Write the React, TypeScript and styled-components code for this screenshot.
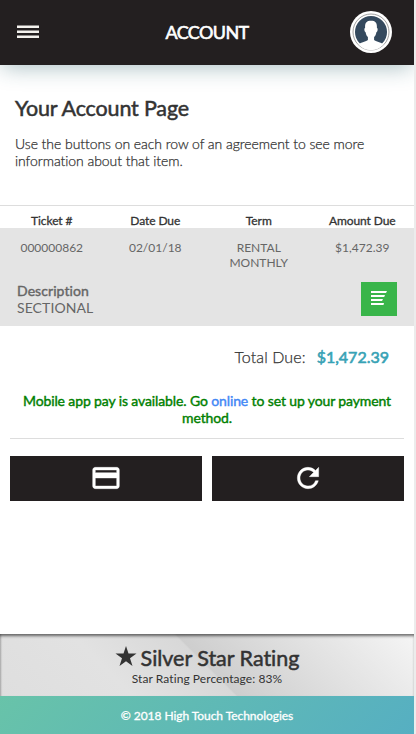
import React from 'react';
import styled, { createGlobalStyle } from 'styled-components';

const Global = createGlobalStyle`
  * { box-sizing: border-box; }
  body { margin: 0; background: #fff; font-family: Lato, sans-serif; color: #333; font-variant-ligatures: none; }
  h1, h2, p { margin: 0; font-weight: 400; }
`;

const Screen = styled.div`
  width: 416px;
  height: 734px;
  display: flex;
  flex-direction: column;
  overflow: hidden;
  border-right: 2px solid #ececec;
`;

const Header = styled.header`
  flex: none;
  height: 65px;
  display: grid;
  grid-template-columns: 64px 1fr 64px;
  align-items: center;
  background: #231f20;
  box-shadow: 0 4px 22px -2px rgba(35, 90, 100, 0.4);
  color: #fff;
`;

const MenuIcon = styled.svg`
  width: 22px;
  height: 14px;
  margin: -2px 0 0 17px;
  fill: #f4f2ee;
`;

const Title = styled.h1`
  font-size: 18px;
  line-height: 22px;
  margin-top: -2px;
  letter-spacing: -0.6px;
  text-align: center;
  -webkit-text-stroke: 0.6px currentColor;
`;

const Avatar = styled.svg`
  width: 42px;
  height: 42px;
  margin-top: -2px;
`;

const Intro = styled.section`
  flex: none;
  height: 140px;
  padding: 29px 15px 0;
`;

const Heading = styled.h2`
  font-size: 21.5px;
  line-height: 28px;
  letter-spacing: -0.16px;
  -webkit-text-stroke: 0.5px currentColor;
`;

const Lead = styled.p`
  margin-top: 13px;
  font-size: 14px;
  line-height: 17px;
  font-weight: 300;
  letter-spacing: -0.06px;
  -webkit-text-stroke: 0.25px currentColor;
`;

const Columns = styled.div<{ $head?: boolean }>`
  display: grid;
  grid-template-columns: repeat(4, 1fr);
  text-align: center;
  font-size: 12px;
  line-height: 15px;
  color: ${(p) => (p.$head ? '#333' : '#666')};
  ${(p) =>
    p.$head
      ? 'flex: none; height: 23px; padding-top: 7px; border-top: 1px solid #ddd; letter-spacing: -0.08px; -webkit-text-stroke: 0.3px currentColor;'
      : 'height: 54px; padding-top: 12px;'}
`;

const Agreement = styled.section`
  flex: none;
  height: 98px;
  background: #e4e4e4;
  color: #666;
`;

const Details = styled.div`
  display: flex;
  justify-content: space-between;
  padding: 0 17px;
  font-size: 14px;
  line-height: 17px;
  letter-spacing: 0.08px;
`;

const Label = styled.div`
  -webkit-text-stroke: 0.4px currentColor;
`;

const DetailsButton = styled.button`
  width: 36px;
  height: 34px;
  padding: 0 0 2px;
  border: 0;
  background: #39b54a;
  display: grid;
  place-items: center;
`;

const Total = styled.div`
  flex: none;
  display: flex;
  justify-content: flex-end;
  gap: 11px;
  height: 66px;
  padding: 21px 25px 0 0;
  font-size: 16px;
  line-height: 20px;
`;

const TotalLabel = styled.span`
  font-weight: 300;
  letter-spacing: 0.1px;
  -webkit-text-stroke: 0.25px currentColor;
`;

const Amount = styled.span`
  color: #37a2b5;
  -webkit-text-stroke: 0.6px currentColor;
`;

const Notice = styled.p`
  flex: none;
  height: 47px;
  margin: 0 10px;
  border-bottom: 1px solid #ddd;
  text-align: center;
  font-size: 14px;
  line-height: 17px;
  letter-spacing: -0.12px;
  color: #008000;
  -webkit-text-stroke: 0.4px currentColor;
`;

const Link = styled.a`
  color: #4287f5;
`;

const Actions = styled.div`
  flex: none;
  display: grid;
  grid-template-columns: 1fr 1fr;
  gap: 10px;
  padding: 17px 10px 0;
`;

const Action = styled.button`
  height: 45px;
  padding: 0 0 2px;
  border: 0;
  background: #231f20;
  display: grid;
  place-items: center;
  svg { width: 32px; height: 32px; fill: #fff; stroke: #fff; stroke-width: 0.3; }
`;

const Rating = styled.section`
  flex: none;
  height: 62px;
  margin-top: auto;
  padding-top: 11px;
  text-align: center;
  background: linear-gradient(45deg, #dedede 0%, #e2e2e2 28%, #d8d8d8 49.5%, #cecece 50%, #f5f5f5 100%);
  box-shadow: inset 0 3px 3px -1px rgba(0, 0, 0, 0.55), inset 2px 0 2px -1px rgba(0, 0, 0, 0.18);
`;

const RatingTitle = styled.div`
  display: flex;
  justify-content: center;
  gap: 4px;
  font-size: 21.5px;
  line-height: 27px;
  letter-spacing: -0.02px;
  -webkit-text-stroke: 0.5px currentColor;
`;

const RatingText = styled.div`
  font-size: 12px;
  line-height: 14px;
  letter-spacing: 0.07px;
`;

const Footer = styled.footer`
  flex: none;
  height: 38px;
  background: linear-gradient(135deg, #68c3a9, #56afc2);
  color: #fff;
  text-align: center;
  font-size: 12px;
  line-height: 39px;
  letter-spacing: -0.05px;
  -webkit-text-stroke: 0.3px currentColor;
`;

export default function App() {
  return (
    <Screen>
      <Global />
      <Header>
        <MenuIcon viewBox="0 0 22 14">
          <path d="M0 .5h22v2.500H0zM0 5.500h22v2.500H0zM0 10.500h22v2.500H0z" />
        </MenuIcon>
        <Title>ACCOUNT</Title>
        <Avatar viewBox="0 0 42 42">
          <circle cx="21" cy="21" r="21" fill="#fff" />
          <circle cx="21" cy="21" r="18" fill="none" stroke="#777" strokeWidth=".7" />
          <circle cx="21" cy="21" r="16" fill="#34495e" />
          <path
            d="M21 9.800c4.500 0 6.200 2 5.900 7.200 1.200 0 .9 3.600-.5 4.200-.4 2.400-1.200 3.800-2.300 4.800v3c1.500 1.600 7 2.200 9.500 4.600a17 17 0 0 1-25.200 0c2.500-2.400 8-3 9.500-4.600v-3c-1.100-1-1.900-2.400-2.300-4.800-1.400-.6-1.700-4.200-.5-4.200C14.800 11.800 16.500 9.800 21 9.800z"
            fill="#fff"
          />
        </Avatar>
      </Header>
      <Intro>
        <Heading>Your Account Page</Heading>
        <Lead>Use the buttons on each row of an agreement to see more information about that item.</Lead>
      </Intro>
      <Columns $head>
        <span>Ticket #</span>
        <span>Date Due</span>
        <span>Term</span>
        <span>Amount Due</span>
      </Columns>
      <Agreement>
        <Columns>
          <span>000000862</span>
          <span>02/01/18</span>
          <span>RENTAL<br />MONTHLY</span>
          <span>$1,472.39</span>
        </Columns>
        <Details>
          <div>
            <Label>Description</Label>
            SECTIONAL
          </div>
          <DetailsButton aria-label="Details">
            <svg width="16" height="16" viewBox="0 0 16 16" fill="#fff">
              <path d="M0 1h16l-1 2H0zM0 5h14l-.8 2H0zM0 9h12l-1 2H0zM0 13h13l-.5 2H0z" />
            </svg>
          </DetailsButton>
        </Details>
      </Agreement>
      <Total>
        <TotalLabel>Total Due:</TotalLabel>
        <Amount>$1,472.39</Amount>
      </Total>
      <Notice>
        Mobile app pay is available. Go <Link>online</Link> to set up your payment method.
      </Notice>
      <Actions>
        <Action aria-label="Pay">
          <svg viewBox="0 0 24 24">
            <path d="M20 4H4c-1.110 0-1.990.89-1.990 2L2 18c0 1.110.89 2 2 2h16c1.110 0 2-.89 2-2V6c0-1.110-.89-2-2-2zm0 14H4v-6h16v6zm0-10H4V6h16v2z" />
          </svg>
        </Action>
        <Action aria-label="Refresh">
          <svg viewBox="0 0 24 24">
            <path d="M17.650 6.350A7.958 7.958 0 0 0 12 4c-4.420 0-7.990 3.580-7.990 8s3.570 8 7.990 8c3.730 0 6.840-2.550 7.730-6h-2.080A5.990 5.990 0 0 1 12 18c-3.310 0-6-2.690-6-6s2.690-6 6-6c1.660 0 3.140.69 4.220 1.780L13 11h7V4l-2.350 2.350z" />
          </svg>
        </Action>
      </Actions>
      <Rating>
        <RatingTitle>
          <svg width="22" height="22" viewBox="0 0 22 22" fill="#333">
            <path d="M11 1l2.500 7.500H21.500l-6.500 4.800 2.500 7.700L11 16.200 4.500 21 7 13.300.5 8.500h8z" />
          </svg>
          <span>Silver Star Rating</span>
        </RatingTitle>
        <RatingText>Star Rating Percentage: 83%</RatingText>
      </Rating>
      <Footer>© 2018 High Touch Technologies</Footer>
    </Screen>
  );
}
